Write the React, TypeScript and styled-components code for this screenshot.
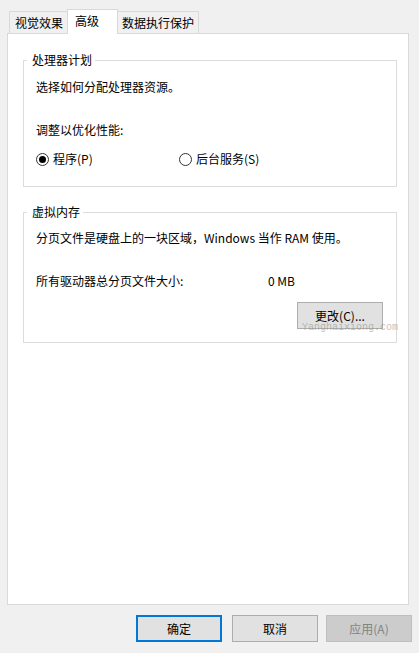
import React from "react";
import styled, { createGlobalStyle } from "styled-components";

const GlobalStyle = createGlobalStyle`
  html, body {
    margin: 0;
    padding: 0;
    background: #f0f0f0;
  }
  body {
    font-family: "Noto Sans CJK SC", "Microsoft YaHei", sans-serif;
    font-size: 12px;
    color: #000;
  }
  * { box-sizing: border-box; }
`;

const Window = styled.div`
  width: 419px;
  height: 653px;
  padding: 9px 10px 0 7px;
  display: flex;
  flex-direction: column;
`;

const TabStrip = styled.div`
  display: flex;
  align-items: flex-end;
  height: 24px;
  padding-left: 2px;
`;

const Tab = styled.div<{ $active?: boolean; $w: number; $pl: number; $first?: boolean }>`
  width: ${(p) => p.$w}px;
  height: ${(p) => (p.$active ? 25 : 22)}px;
  margin-bottom: ${(p) => (p.$active ? -1 : 0)}px;
  padding-left: ${(p) => p.$pl}px;
  padding-bottom: ${(p) => (p.$active ? 2 : 0)}px;
  display: flex;
  align-items: center;
  background: ${(p) => (p.$active ? "#ffffff" : "#f0f0f0")};
  border-top: 1px solid #d9d9d9;
  border-left: ${(p) => (p.$active || p.$first ? "1px solid #d9d9d9" : "none")};
  border-right: ${(p) => (p.$first ? "none" : "1px solid #d9d9d9")};
  position: relative;
  z-index: ${(p) => (p.$active ? 1 : 0)};
  line-height: 16px;
  white-space: nowrap;
`;

const Panel = styled.div`
  width: 402px;
  height: 572px;
  background: #fff;
  border: 1px solid #d9d9d9;
  padding: 18px 11px 0 15px;
  display: flex;
  flex-direction: column;
`;

const Group = styled.fieldset<{ $mt: number; $pb: number }>`
  margin: ${(p) => p.$mt}px 0 0 0;
  padding: 0 13px ${(p) => p.$pb}px 12px;
  border: 1px solid #dcdcdc;
  min-width: 0;
`;

const Legend = styled.legend`
  margin-left: -9px;
  padding: 0 3px 0 5px;
  line-height: 16px;
`;

const Line = styled.div<{ $mt: number }>`
  margin-top: ${(p) => p.$mt}px;
  line-height: 16px;
  height: 16px;
  white-space: nowrap;
  display: flex;
`;

const Label = styled.span<{ $w?: number }>`
  display: inline-block;
  width: ${(p) => (p.$w ? `${p.$w}px` : "auto")};
`;

const RadioRow = styled.div`
  margin-top: 13px;
  display: flex;
  height: 16px;
  line-height: 16px;
`;

const RadioOption = styled.label<{ $w?: number }>`
  display: flex;
  align-items: center;
  gap: 4px;
  width: ${(p) => (p.$w ? `${p.$w}px` : "auto")};
`;

const RadioCircle = styled.span<{ $checked?: boolean }>`
  width: 13px;
  height: 13px;
  border-radius: 50%;
  border: 1px solid #333;
  display: flex;
  align-items: center;
  justify-content: center;
  background: #fff;
  &::after {
    content: "";
    width: 7px;
    height: 7px;
    border-radius: 50%;
    background: ${(p) => (p.$checked ? "#000" : "transparent")};
  }
`;

const ButtonRow = styled.div<{ $mt: number }>`
  margin-top: ${(p) => p.$mt}px;
  display: flex;
  justify-content: flex-end;
  position: relative;
`;

const Button = styled.div<{ $variant?: "default" | "normal" | "disabled" }>`
  width: 86px;
  height: 27px;
  display: flex;
  align-items: center;
  justify-content: center;
  line-height: 16px;
  background: ${(p) => (p.$variant === "disabled" ? "#cccccc" : "#e1e1e1")};
  border: ${(p) =>
    p.$variant === "default"
      ? "2px solid #0078d7"
      : p.$variant === "disabled"
      ? "1px solid #bfbfbf"
      : "1px solid #adadad"};
  color: ${(p) => (p.$variant === "disabled" ? "#838383" : "#000")};
`;

const Watermark = styled.span`
  position: absolute;
  right: -15px;
  top: 21px;
  font-family: "Liberation Mono", "DejaVu Sans Mono", monospace;
  font-size: 10px;
  line-height: 10px;
  color: rgba(140, 140, 140, 0.55);
  pointer-events: none;
`;

const DialogButtons = styled.div`
  margin-top: 10px;
  display: flex;
  justify-content: flex-end;
  margin-right: -3px;
`;

const Spacer = styled.div<{ $w: number }>`
  width: ${(p) => p.$w}px;
`;

export default function App() {
  return (
    <>
      <GlobalStyle />
      <Window>
        <TabStrip>
          <Tab $w={58} $pl={5} $first>视觉效果</Tab>
          <Tab $w={51} $pl={7} $active>高级</Tab>
          <Tab $w={81} $pl={4}>数据执行保护</Tab>
        </TabStrip>
        <Panel>
          <Group $mt={0} $pb={19}>
            <Legend>处理器计划</Legend>
            <Line $mt={11}>选择如何分配处理器资源。</Line>
            <Line $mt={27}>调整以优化性能:</Line>
            <RadioRow>
              <RadioOption $w={143}>
                <RadioCircle $checked />
                <span>程序(P)</span>
              </RadioOption>
              <RadioOption>
                <RadioCircle />
                <span>后台服务(S)</span>
              </RadioOption>
            </RadioRow>
          </Group>
          <Group $mt={17} $pb={13}>
            <Legend>虚拟内存</Legend>
            <Line $mt={10}>分页文件是硬盘上的一块区域，Windows 当作 RAM 使用。</Line>
            <Line $mt={27}>
              <Label $w={232}>所有驱动器总分页文件大小:</Label>
              <Label>0 MB</Label>
            </Line>
            <ButtonRow $mt={13}>
              <Button $variant="normal">更改(C)...</Button>
              <Watermark>Yanghaixiong.com</Watermark>
            </ButtonRow>
          </Group>
        </Panel>
        <DialogButtons>
          <Button $variant="default">确定</Button>
          <Spacer $w={10} />
          <Button $variant="normal">取消</Button>
          <Spacer $w={8} />
          <Button $variant="disabled">应用(A)</Button>
        </DialogButtons>
      </Window>
    </>
  );
}
